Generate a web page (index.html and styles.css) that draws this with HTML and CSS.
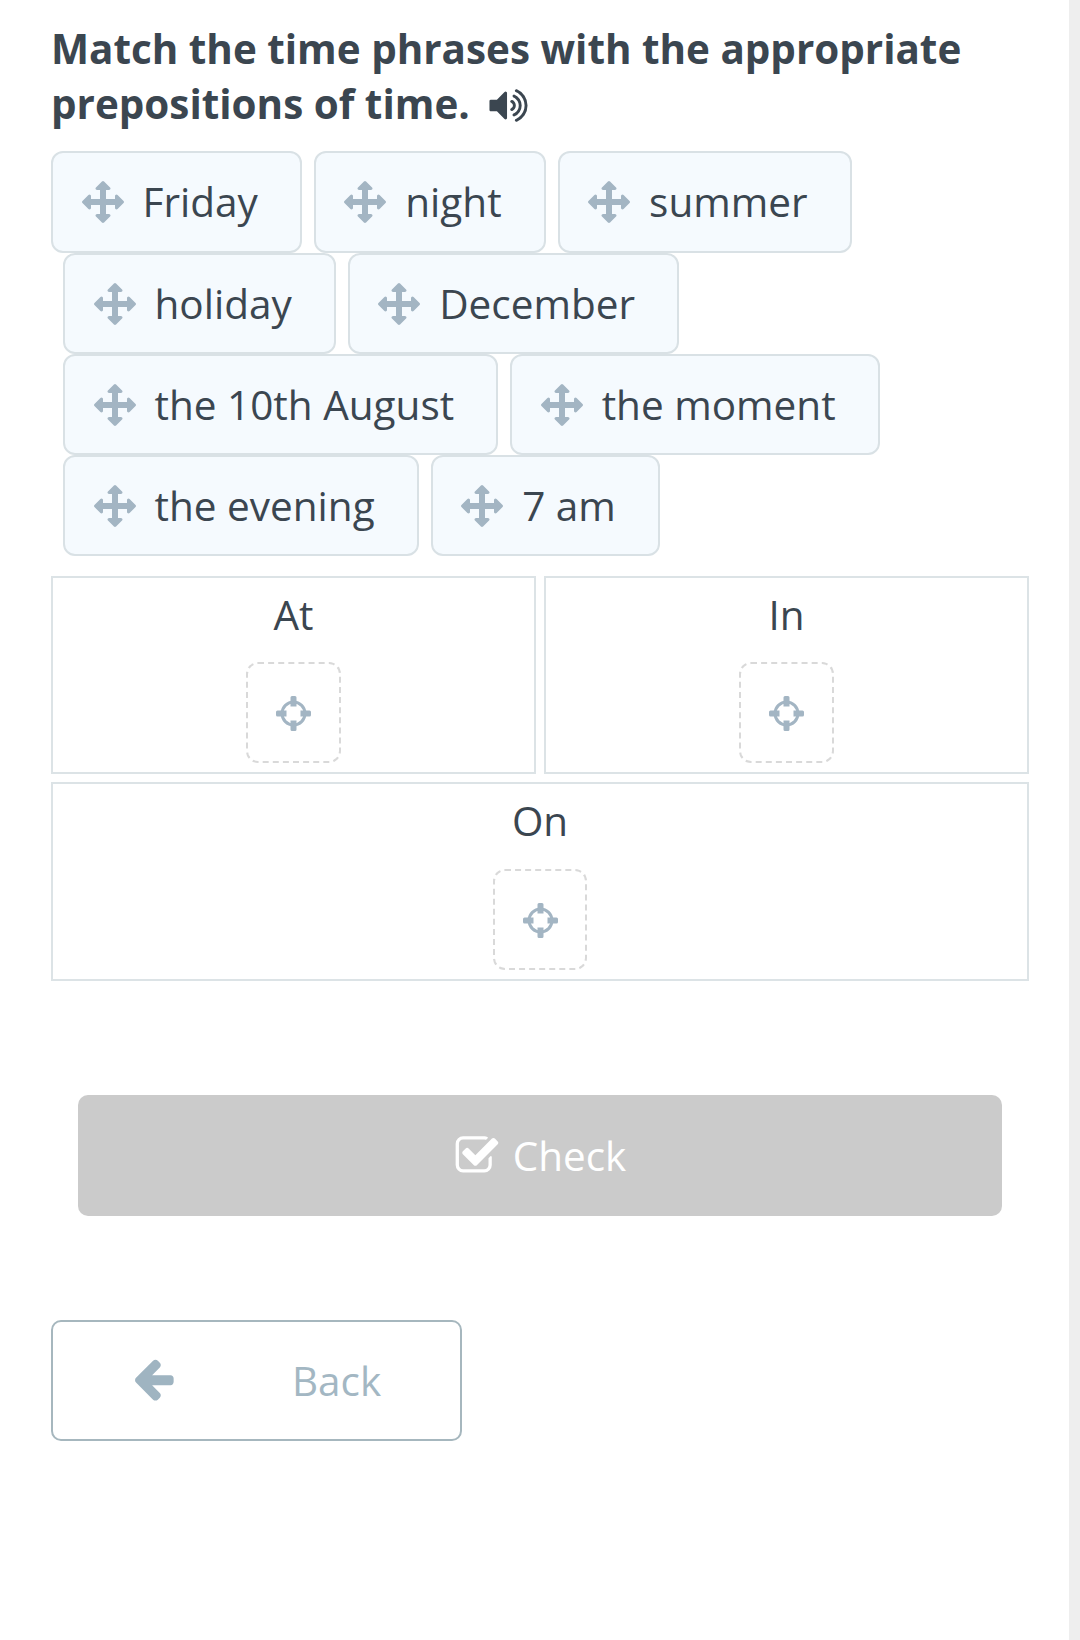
FILE: index.html
```html
<!DOCTYPE html>
<html lang="en">
<head>
<meta charset="utf-8">
<title>Match the time phrases</title>
<link rel="stylesheet" href="styles.css">
</head>
<body>
<svg class="defs" width="0" height="0" aria-hidden="true">
  <defs>
    <symbol id="i-move" viewBox="0 0 1792 1792"><path d="M1792 896q0 26-19 45l-256 256q-19 19-45 19t-45-19-19-45v-128h-384v384h128q26 0 45 19t19 45-19 45l-256 256q-19 19-45 19t-45-19l-256-256q-19-19-19-45t19-45 45-19h128v-384h-384v128q0 26-19 45t-45 19-45-19l-256-256q-19-19-19-45t19-45l256-256q19-19 45-19t45 19 19 45v128h384v-384h-128q-26 0-45-19t-19-45 19-45l256-256q19-19 45-19t45 19l256 256q19 19 19 45t-19 45-45 19h-128v384h384v-128q0-26 19-45t45-19 45 19l256 256q19 19 19 45z"/></symbol>
    <symbol id="i-cross" viewBox="0 0 35 35">
      <circle class="cross-ring" cx="17.5" cy="17.5" r="11.5"/>
      <path class="cross-stubs" d="M14.5 1.5q0-1.5 1.5-1.5h3q1.5 0 1.5 1.5v9h-6zM14.5 24.5h6v9q0 1.500-1.500 1.500h-3q-1.500 0-1.500-1.500zM1.500 14.500h9v6h-9q-1.500 0-1.500-1.500v-3q0-1.500 1.500-1.500zM24.500 14.500h9q1.500 0 1.500 1.500v3q0 1.500-1.500 1.500h-9z"/>
    </symbol>
  </defs>
</svg>
<div class="page">
  <main class="content">
    <h1 class="title">Match the time phrases with the appropriate prepositions of time.
      <svg class="speaker" viewBox="0 0 1792 1792"><path d="M832 352v1088q0 26-19 45t-45 19-45-19l-333-333h-262q-26 0-45-19t-19-45v-384q0-26 19-45t45-19h262l333-333q19-19 45-19t45 19 19 45zm384 544q0 76-42.5 141.5t-112.5 93.5q-10 5-25 5-26 0-45-18.5t-19-45.5q0-21 12-35.5t29-25 34-23 29-36 12-56.5-12-56.5-29-36-34-23-29-25-12-35.5q0-27 19-45.5t45-18.5q15 0 25 5 70 27 112.5 93t42.5 142zm256 0q0 153-85 282.5t-225 188.5q-13 5-25 5-27 0-46-19t-19-45q0-39 39-59 56-29 76-44 74-54 115.5-135.5t41.5-173.5-41.5-173.5-115.5-135.5q-20-15-76-44-39-20-39-59 0-26 19-45t45-19q13 0 26 5 140 59 225 188.5t85 282.5zm256 0q0 230-127 422.5t-338 283.5q-13 5-26 5-26 0-45-19t-19-45q0-36 39-59 7-4 22.5-10.5t22.5-10.5q46-25 82-51 123-91 192-227t69-289-69-289-192-227q-36-26-82-51-7-4-22.5-10.5t-22.5-10.5q-39-23-39-59 0-26 19-45t45-19q13 0 26 5 211 91 338 283.5t127 422.5z"/></svg>
    </h1>

    <div class="chips">
      <div class="chip chip-first"><svg class="move"><use href="#i-move"/></svg><span>Friday</span></div>
      <div class="chip"><svg class="move"><use href="#i-move"/></svg><span>night</span></div>
      <div class="chip"><svg class="move"><use href="#i-move"/></svg><span>summer</span></div>
      <div class="chip"><svg class="move"><use href="#i-move"/></svg><span>holiday</span></div>
      <div class="chip"><svg class="move"><use href="#i-move"/></svg><span>December</span></div>
      <div class="chip"><svg class="move"><use href="#i-move"/></svg><span>the 10th August</span></div>
      <div class="chip"><svg class="move"><use href="#i-move"/></svg><span>the moment</span></div>
      <div class="chip"><svg class="move"><use href="#i-move"/></svg><span>the evening</span></div>
      <div class="chip"><svg class="move"><use href="#i-move"/></svg><span>7 am</span></div>
    </div>

    <div class="targets">
      <section class="target">
        <div class="target-label">At</div>
        <div class="slot"><svg class="cross"><use href="#i-cross"/></svg></div>
      </section>
      <section class="target">
        <div class="target-label">In</div>
        <div class="slot"><svg class="cross"><use href="#i-cross"/></svg></div>
      </section>
      <section class="target target-wide">
        <div class="target-label">On</div>
        <div class="slot"><svg class="cross"><use href="#i-cross"/></svg></div>
      </section>
    </div>

    <button class="check" type="button">
      <svg class="check-icon" viewBox="0 0 1792 1792"><path d="M1472 930v318q0 119-84.5 203.5t-203.5 84.5h-832q-119 0-203.5-84.5t-84.5-203.5v-832q0-119 84.5-203.5t203.5-84.5h832q63 0 117 25 15 7 18 23 3 17-9 29l-49 49q-10 10-23 10-3 0-9-2-23-6-45-6h-832q-66 0-113 47t-47 113v832q0 66 47 113t113 47h832q66 0 113-47t47-113v-254q0-13 9-22l64-64q10-10 23-10 6 0 12 3 20 8 20 29zm231-489l-814 814q-24 24-57 24t-57-24l-430-430q-24-24-24-57t24-57l110-110q24-24 57-24t57 24l263 263 647-647q24-24 57-24t57 24l110 110q24 24 24 57t-24 57z"/></svg>
      <span>Check</span>
    </button>

    <button class="back" type="button">
      <svg class="back-icon" viewBox="0 0 1792 1792"><path d="M1664 896v128q0 53-32.5 90.5t-84.5 37.5h-704l293 294q38 36 38 90t-38 90l-75 76q-37 37-90 37-52 0-91-37l-651-652q-37-37-37-90 0-52 37-91l651-650q38-38 91-38 52 0 90 38l75 74q38 38 38 91t-38 91l-293 293h704q52 0 84.5 37.5t32.5 90.5z"/></svg>
      <span class="back-label">Back</span>
    </button>
  </main>
  <aside class="rail"></aside>
</div>
</body>
</html>
```

FILE: styles.css
```css
* { box-sizing: border-box; }
html, body { margin: 0; padding: 0; background: #fff; }
body {
  font-family: "Open Sans", "Noto Sans", sans-serif;
  color: #3b4650;
}
.defs { position: absolute; }
.page { display: flex; width: 1080px; height: 1640px; overflow: hidden; }
.content { width: 1069px; padding: 21px 40px 0 51px; }
.rail { width: 11px; background: #eeeeee; }

.title {
  margin: 0;
  font-size: 40.4px;
  line-height: 55px;
  font-weight: 700;
  color: #3b4650;
}
.speaker { width: 41px; height: 41px; margin-left: 8px; fill: #3b4650; vertical-align: -7px; }

.chips {
  display: flex;
  flex-wrap: wrap;
  gap: 0 12px;
  margin-top: 20px;
  padding-left: 12px;
}
.chip {
  display: flex;
  align-items: center;
  min-height: 101px;
  padding: 0 42px 0 28.5px;
  background: #f5fafe;
  border: 2px solid #d9e1e5;
  border-radius: 12px;
  font-size: 40.5px;
  line-height: 54px;
}
.chip-first { margin-left: -12px; min-height: 102px; }
.move { width: 42px; height: 42px; margin-right: 19px; fill: #a3b5c3; flex: none; }

.targets {
  display: grid;
  grid-template-columns: 1fr 1fr;
  gap: 8px;
  margin-top: 20px;
}
.target {
  display: flex;
  flex-direction: column;
  align-items: center;
  height: 198px;
  border: 2px solid #dce3e6;
}
.target-wide { grid-column: 1 / -1; height: 199px; }
.target-label { font-size: 40.4px; line-height: 54px; margin-top: 10px; }
.slot {
  display: flex;
  align-items: center;
  justify-content: center;
  width: 95px;
  height: 101px;
  margin-top: 20px;
  border: 2px dashed #d9d9d9;
  border-radius: 12px;
}
.target-wide .slot { margin-top: 21px; width: 94px; }
.cross { width: 35px; height: 35px; margin-top: 2px; }
.cross-ring { fill: none; stroke: #a3b5c3; stroke-width: 3; }
.cross-stubs { fill: #a3b5c3; }

.check {
  display: flex;
  align-items: center;
  justify-content: center;
  gap: 13px;
  width: 924px;
  height: 121px;
  margin: 114px 0 0 27px;
  padding: 0;
  border: 0;
  border-radius: 10px;
  background: #cbcbcb;
  color: #fff;
  font: inherit;
  font-size: 40.4px;
}
.check-icon { width: 46px; height: 46px; fill: #fff; }

.back {
  display: flex;
  align-items: center;
  width: 411px;
  height: 121px;
  margin-top: 104px;
  padding: 0 0 0 77px;
  border: 2px solid #a6b7be;
  border-radius: 10px;
  background: #fff;
  color: #a3b7c3;
  font: inherit;
  font-size: 40.4px;
}
.back-icon { width: 47px; height: 47px; margin-bottom: 4px; fill: #9fb4c1; flex: none; }
.back-label { margin-left: 115px; }
```
